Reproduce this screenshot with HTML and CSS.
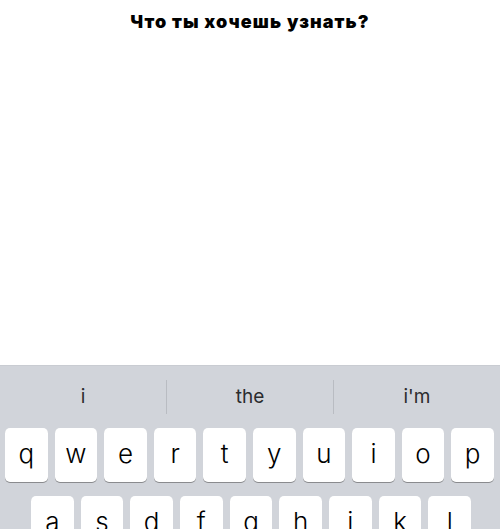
FILE: index.html
```html
<!DOCTYPE html>
<html lang="ru">
<head>
<meta charset="utf-8">
<link rel="stylesheet" href="styles.css">
</head>
<body>
<div class="screen">
  <div class="content">
    <h1 class="title">Что ты хочешь узнать?</h1>
  </div>
  <div class="keyboard">
    <div class="suggestions">
      <div class="sugg">i</div>
      <div class="divider"></div>
      <div class="sugg">the</div>
      <div class="divider"></div>
      <div class="sugg">i'm</div>
    </div>
    <div class="row row1">
      <div class="key">q</div><div class="key">w</div><div class="key">e</div><div class="key">r</div><div class="key">t</div><div class="key">y</div><div class="key">u</div><div class="key">i</div><div class="key">o</div><div class="key">p</div>
    </div>
    <div class="row row2">
      <div class="key">a</div><div class="key">s</div><div class="key">d</div><div class="key">f</div><div class="key">g</div><div class="key">h</div><div class="key">j</div><div class="key">k</div><div class="key">l</div>
    </div>
  </div>
</div>
</body>
</html>
```
FILE: styles.css
```css
html, body {
  margin: 0;
  padding: 0;
  background: #ffffff;
}
.screen {
  width: 500px;
  height: 529px;
  overflow: hidden;
  display: flex;
  flex-direction: column;
}
.content {
  height: 365px;
  flex: none;
  background: #ffffff;
}
.title {
  margin: 0;
  padding-top: 11px;
  text-align: center;
  font-family: "Inter", "DejaVu Sans", sans-serif;
  font-weight: 900;
  font-size: 18px;
  line-height: 22px;
  color: #000;
  letter-spacing: 1.1px;
}
.keyboard {
  flex: none;
  background: #d1d4da;
  border-top: 1px solid #c9ccd2;
  font-family: "Inter", "Liberation Sans", sans-serif;
}
.suggestions {
  height: 62px;
  display: flex;
  align-items: center;
}
.sugg {
  flex: 1;
  text-align: center;
  font-size: 19px;
  color: #2b2c2e;
  padding-bottom: 2px;
}
.divider {
  width: 1px;
  height: 34px;
  background: #b9bcc2;
}
.row {
  display: flex;
  gap: 7px;
  margin-bottom: 14px;
}
.row1 {
  padding: 0 6px 0 5px;
}
.row2 {
  padding: 0 29px 0 31px;
}
.key {
  flex: 1;
  height: 54px;
  background: #ffffff;
  border-radius: 5px;
  box-shadow: 0 1px 0 #8a8b8e;
  display: flex;
  align-items: center;
  justify-content: center;
  font-size: 26px;
  font-weight: 300;
  color: #000;
  padding-bottom: 4px;
  box-sizing: border-box;
}
```
